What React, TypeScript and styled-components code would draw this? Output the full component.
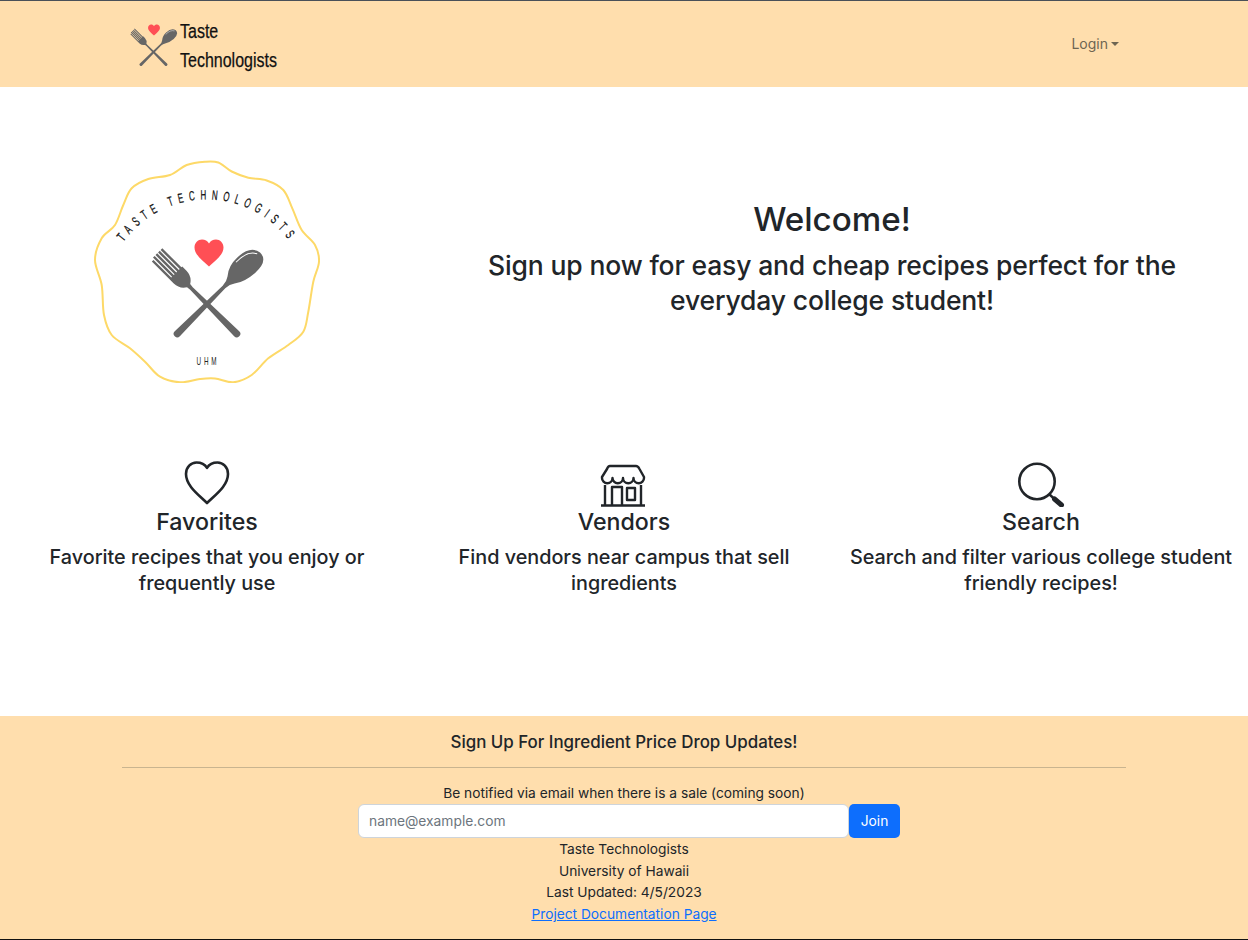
import React from "react";
import styled, { createGlobalStyle } from "styled-components";

const Global = createGlobalStyle`
  html, body { margin: 0; padding: 0; background: #fff; }
  body { font-family: Inter, "Liberation Sans", sans-serif; color: #212529; }
  * { box-sizing: border-box; }
`;

const Page = styled.div`
  width: 1248px;
  height: 940px;
  display: flex;
  flex-direction: column;
  border-top: 1px solid #4a5058;
  border-bottom: 1px solid #111;
  overflow: hidden;
`;

const NavBar = styled.header`
  height: 86px;
  flex: none;
  background: #ffdead;
  display: flex;
  align-items: center;
  justify-content: space-between;
  padding: 0 129px 0 130px;
`;

const Brand = styled.div`
  display: flex;
  align-items: center;
  gap: 2px;
`;

const BrandText = styled.div`
  font-family: "Liberation Sans", sans-serif;
  font-size: 20px;
  line-height: 29px;
  color: #111;
  margin-top: 3px;
  transform: scaleX(0.8);
  transform-origin: left center;
  -webkit-text-stroke: 0.25px #111;
`;

const LoginToggle = styled.button`
  border: 0;
  background: none;
  padding: 0;
  font: 400 14px/20px Inter, "Liberation Sans", sans-serif;
  color: #6e6552;
  display: flex;
  align-items: center;
  gap: 3px;
  &::after {
    content: "";
    border-top: 4px solid #6e6552;
    border-left: 4px solid transparent;
    border-right: 4px solid transparent;
  }
`;

const Main = styled.main`
  flex: 1;
  display: flex;
  flex-direction: column;
`;

const Hero = styled.section`
  display: grid;
  grid-template-columns: 416px 832px;
  align-items: center;
  padding-top: 72px;
`;

const HeroLogo = styled.div`
  display: flex;
  justify-content: center;
  padding-right: 2px;
`;

const HeroText = styled.div`
  text-align: center;
  padding: 0 56px 26px;
`;

const Title = styled.h1`
  margin: 0 0 9px;
  font-size: 33.2px;
  line-height: 40px;
  font-weight: 500;
`;

const Lead = styled.h2`
  margin: 0;
  font-size: 26.5px;
  line-height: 34.5px;
  font-weight: 500;
  letter-spacing: -0.15px;
`;

const Features = styled.section`
  display: grid;
  grid-template-columns: repeat(3, 414px);
  column-gap: 3px;
  margin-top: 78px;
`;

const Feature = styled.article`
  display: flex;
  flex-direction: column;
  align-items: center;
  text-align: center;
  padding: 0 12px;
`;

const IconSlot = styled.div`
  height: 46px;
  display: flex;
  align-items: center;
  justify-content: center;
`;

const FeatureTitle = styled.h3`
  margin: 0 0 7px;
  font-size: 23.2px;
  line-height: 30px;
  font-weight: 500;
`;

const FeatureText = styled.p`
  margin: 0;
  font-size: 19.8px;
  line-height: 26px;
  font-weight: 500;
`;

const Footer = styled.footer`
  height: 223px;
  flex: none;
  background: #ffdead;
  text-align: center;
  padding-top: 15px;
  font-size: 13.75px;
`;

const FooterHeading = styled.h4`
  margin: 0;
  font-size: 16.9px;
  line-height: 22px;
  font-weight: 500;
`;

const Rule = styled.hr`
  margin: 14px 122px 15px;
  border: 0;
  border-top: 1px solid #c9b48f;
`;

const Note = styled.div`
  line-height: 21px;
`;

const SignupRow = styled.form`
  display: flex;
  justify-content: center;
  padding-left: 10px;
  margin-bottom: 1px;
`;

const EmailInput = styled.input`
  width: 491px;
  height: 34px;
  border: 1px solid #ced4da;
  border-radius: 6px;
  padding: 0 10px;
  font: 400 13.8px Inter, "Liberation Sans", sans-serif;
  background: #fff;
  &::placeholder { color: #6c757d; opacity: 1; }
`;

const JoinButton = styled.button`
  width: 51px;
  height: 34px;
  border: 0;
  border-radius: 5px;
  background: #0d6efd;
  color: #fff;
  padding: 0 0 1px;
  font: 400 13.8px Inter, "Liberation Sans", sans-serif;
`;

const FooterLine = styled.div`
  line-height: 21.6px;
`;

const DocLink = styled.a`
  color: #0d6efd;
  text-decoration: underline;
`;

/* Badge outline traced from the reference, in page pixels; the badge centre is (207, 271). */
const outline: [number, number][] = [
  [205, 161.7], [218.3, 162.5], [231.7, 171.5], [248.3, 177.7], [266.7, 180.5], [283.3, 190], [292.3, 208.3],
  [301.7, 230], [315, 245], [319, 261.7], [313.3, 281.7], [308.3, 311.7], [303.3, 331.7], [288.3, 345],
  [268.3, 358.3], [251.7, 375], [233.3, 382.3], [215, 378.5], [200, 379], [180, 382.3], [160, 376.7],
  [145, 361.7], [130, 348.3], [111.7, 335], [104, 315], [101.7, 285], [95, 260], [101.7, 238.3], [115, 225],
  [123.3, 205], [131.7, 188.3], [148.3, 179], [170, 175], [186.7, 165],
];

function smoothClosed(points: [number, number][]) {
  const p = points.map(([x, y]) => [x - 207, y - 271]);
  const n = p.length;
  let d = `M${p[0][0].toFixed(1)} ${p[0][1].toFixed(1)}`;
  for (let i = 0; i < n; i++) {
    const a = p[(i - 1 + n) % n], b = p[i], c = p[(i + 1) % n], e = p[(i + 2) % n];
    const c1 = [b[0] + (c[0] - a[0]) / 6, b[1] + (c[1] - a[1]) / 6];
    const c2 = [c[0] - (e[0] - b[0]) / 6, c[1] - (e[1] - b[1]) / 6];
    d += `C${c1[0].toFixed(1)} ${c1[1].toFixed(1)} ${c2[0].toFixed(1)} ${c2[1].toFixed(1)} ${c[0].toFixed(1)} ${c[1].toFixed(1)}`;
  }
  return d + "Z";
}

/* Drawn around the point where fork and spoon cross. */
const Cutlery: React.FC = () => (
  <g fill="#666">
    <g transform="rotate(-45)">
      <path d="M-3.6 42 L-1.8 -22 L-2.2 -26 Q-8.8 -30 -9 -38 L-9 -69 L-6.6 -69 L-6.6 -44 L-5.4 -44 L-5.4 -71 L-3 -71 L-3 -44 L-1.8 -44 L-1.8 -71 L0.6 -71 L0.6 -44 L1.8 -44 L1.8 -71 L4.2 -71 L4.2 -44 L5.4 -44 L5.4 -71 L7.8 -71 L7.8 -44 L9 -44 L9 -38 Q8.8 -30 2.2 -26 L1.8 -22 L3.6 42 A3.6 3.6 0 0 1 -3.6 42 Z" />
    </g>
    <g transform="rotate(45)">
      <path d="M-3.6 42 L-1.8 -24 Q-2 -30 -5 -34 Q-12 -42 -11.5 -54 Q-11 -72 1 -74 Q13 -74 12 -56 Q11 -42 5 -34 Q2 -30 1.8 -24 L3.6 42 A3.6 3.6 0 0 1 -3.6 42 Z" />
      <path d="M-9 -50 Q-9.5 -66 0 -71" fill="none" stroke="#fff" strokeWidth="1" />
    </g>
  </g>
);

const Heart: React.FC = () => (
  <path d="M0 13.5 C-5 8.5 -14.5 2.5 -14.5 -5.5 C-14.5 -10 -11 -13.5 -7 -13.5 C-4 -13.5 -1.4 -12 0 -9.5 C1.4 -12 4 -13.5 7 -13.5 C11 -13.5 14.5 -10 14.5 -5.5 C14.5 2.5 5 8.5 0 13.5 Z" fill="#ff4f55" />
);

const BadgeLogo: React.FC = () => (
  <svg width="226" height="224" viewBox="-113 -112 226 224">
    <path d={smoothClosed(outline)} fill="#fff" stroke="#fdd968" strokeWidth="2" />
    <defs>
      <path id="arc" d="M-94 -10.6 A 103 103 0 0 1 94 -10.6" transform="rotate(2)" />
    </defs>
    <g transform="rotate(-1.5)">
      <text fontFamily='"Liberation Sans", sans-serif' fontSize="13.5" fill="#111" stroke="#111" strokeWidth="0.25" letterSpacing="9">
        <textPath href="#arc" startOffset="50%" textAnchor="middle" textLength="196" lengthAdjust="spacingAndGlyphs">TASTE TECHNOLOGISTS</textPath>
      </text>
    </g>
    <g transform="translate(2 -18)"><Heart /></g>
    <g transform="translate(0 33)"><Cutlery /></g>
    <text x="1" y="94" textAnchor="middle" fontFamily='"Liberation Sans", sans-serif' fontSize="11" fill="#222" letterSpacing="5" textLength="23" lengthAdjust="spacingAndGlyphs">UHM</text>
  </svg>
);

const SmallLogo: React.FC = () => (
  <svg width="48" height="50" viewBox="0 0 48 50">
    <g transform="translate(24 11) scale(0.41)"><Heart /></g>
    <g transform="translate(23.5 33) scale(0.42)"><Cutlery /></g>
  </svg>
);

const HeartIcon = () => (
  <svg width="48" height="46" viewBox="0 0 48 46" fill="none" stroke="#212529" strokeWidth="2.6">
    <path d="M24 42 C16 34 3 25 3 13 C3 6 8 1.5 13.5 1.5 C18 1.5 22 3.5 24 6.8 C26 3.5 30 1.5 34.5 1.5 C40 1.5 45 6 45 13 C45 25 32 34 24 42 Z" strokeLinejoin="round" />
  </svg>
);

const StoreIcon = () => (
  <svg width="48" height="46" viewBox="0 0 48 46" fill="none" stroke="#212529" strokeWidth="2.4" strokeLinejoin="round">
    <path d="M10 5 H36 Q38 5 39.5 8 L44 16 L44 17 A5.25 5.25 0 0 1 33.5 17 A5.25 5.25 0 0 1 23 17 A5.25 5.25 0 0 1 12.5 17 A5.25 5.25 0 0 1 2 17 L2 16 L7 8 Q8 5 10 5 Z" />
    <path d="M5 24 V44 M41 24 V44 M1 44.5 H45" />
    <path d="M12 44 V26 H22 V44" />
    <rect x="27" y="27" width="8" height="12" />
  </svg>
);

const SearchIcon = () => (
  <svg width="48" height="46" viewBox="0 0 48 46" fill="none" stroke="#212529">
    <circle cx="20" cy="20.5" r="17.7" strokeWidth="2.6" />
    <path d="M32 33 L38 38.5" strokeWidth="2.4" />
    <path d="M37.5 38 L44.5 44" strokeWidth="5" strokeLinecap="round" />
  </svg>
);

const features = [
  { title: "Favorites", text: "Favorite recipes that you enjoy or frequently use", icon: <HeartIcon /> },
  { title: "Vendors", text: "Find vendors near campus that sell ingredients", icon: <StoreIcon /> },
  { title: "Search", text: "Search and filter various college student friendly recipes!", icon: <SearchIcon /> },
];

export default function App() {
  return (
    <Page>
      <Global />
      <NavBar>
        <Brand>
          <SmallLogo />
          <BrandText>Taste<br />Technologists</BrandText>
        </Brand>
        <LoginToggle>Login</LoginToggle>
      </NavBar>
      <Main>
        <Hero>
          <HeroLogo><BadgeLogo /></HeroLogo>
          <HeroText>
            <Title>Welcome!</Title>
            <Lead>Sign up now for easy and cheap recipes perfect for the everyday college student!</Lead>
          </HeroText>
        </Hero>
        <Features>
          {features.map((f) => (
            <Feature key={f.title}>
              <IconSlot>{f.icon}</IconSlot>
              <FeatureTitle>{f.title}</FeatureTitle>
              <FeatureText>{f.text}</FeatureText>
            </Feature>
          ))}
        </Features>
      </Main>
      <Footer>
        <FooterHeading>Sign Up For Ingredient Price Drop Updates!</FooterHeading>
        <Rule />
        <Note>Be notified via email when there is a sale (coming soon)</Note>
        <SignupRow>
          <EmailInput placeholder="name@example.com" />
          <JoinButton type="button">Join</JoinButton>
        </SignupRow>
        <FooterLine>Taste Technologists</FooterLine>
        <FooterLine>University of Hawaii</FooterLine>
        <FooterLine>Last Updated: 4/5/2023</FooterLine>
        <FooterLine><DocLink href="#">Project Documentation Page</DocLink></FooterLine>
      </Footer>
    </Page>
  );
}
